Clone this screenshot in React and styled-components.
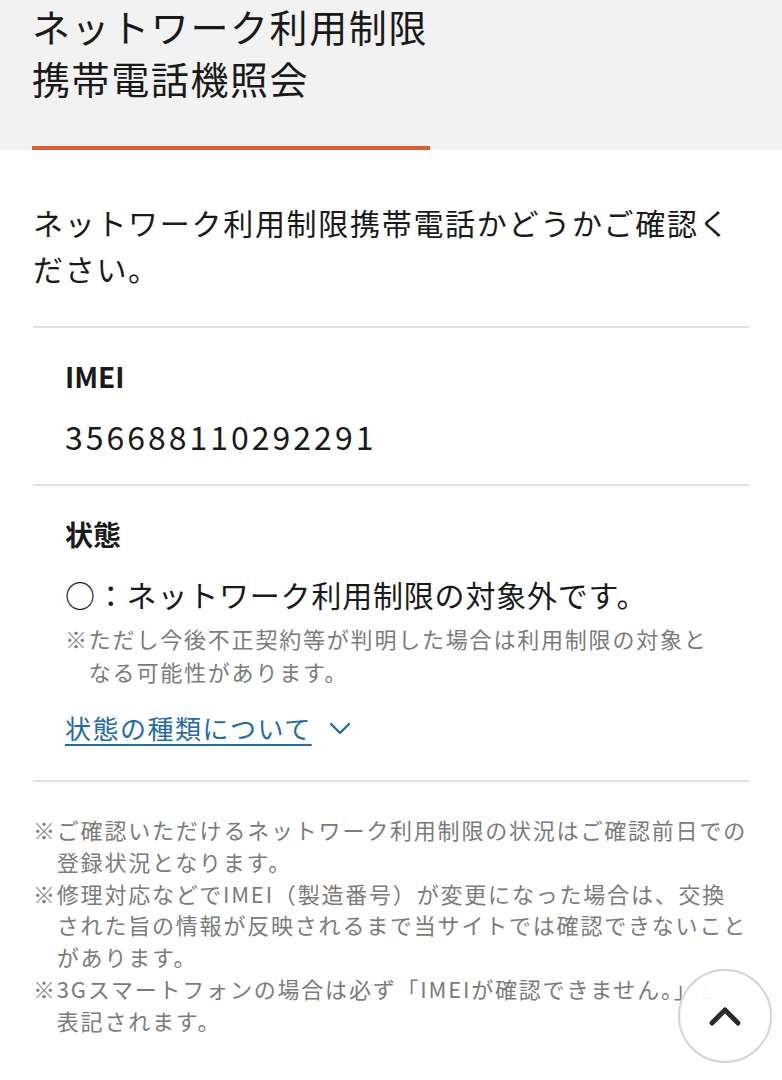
import React from 'react';
import styled, {createGlobalStyle} from 'styled-components';

const Global = createGlobalStyle`
    html, body {
        margin:0;
        padding:0;
        background:#fff;
    }
    body {
        font-family:"Noto Sans CJK JP", "Noto Sans", sans-serif;
        color:#1a1a1a;
    }
`;

const Header = styled.header`
    background-color:#f2f2f2;
    padding:0 32px;
`;

const Title = styled.h1`
    margin:0;
    font-size:38px;
    font-weight:400;
    line-height:52px;
    letter-spacing:1.6px;
    color:#1a1a1a;
`;

const TitleBar = styled.div`
    margin-top:42px;
    width:398px;
    height:4px;
    background:#dd5f2c;
`;

const Main = styled.main`
    padding:0 33px;
`;

const Intro = styled.p`
    margin:49px 0 35px;
    font-size:30px;
    line-height:46px;
    letter-spacing:1.7px;
`;

const Section = styled.section`
    border-top:2px solid #e0e0e0;
    padding:${p => p.$pad || '28px 32px 26px'};
`;

const Label = styled.h2`
    margin:0;
    font-size:28px;
    font-weight:700;
    line-height:40px;
`;

const Value = styled.div`
    margin-top:18px;
    font-size:32px;
    line-height:44px;
    letter-spacing:3px;
`;

const Status = styled.div`
    margin-top:18px;
    font-size:30px;
    line-height:44px;
    letter-spacing:0.8px;
`;

const Note = styled.p`
    margin:${p => p.$m || '0'};
    font-size:22px;
    line-height:${p => p.$lh || '33px'};
    letter-spacing:1.8px;
    color:#7b7b7b;
    padding-left:23.8px;
    text-indent:-23.8px;
`;

const Toggle = styled.a`
    display:inline-flex;
    align-items:center;
    gap:16px;
    margin-top:20px;
    font-size:26px;
    line-height:40px;
    letter-spacing:1.5px;
    color:#1f6bac;
    cursor:pointer;
`;

const ToggleText = styled.span`
    text-decoration:underline;
    text-underline-offset:5px;
`;

const Notes = styled.div`
    border-top:2px solid #e0e0e0;
    padding:32px 1px 0 0;
`;

const TopButton = styled.button`
    position:fixed;
    right:10px;
    bottom:17px;
    width:94px;
    height:94px;
    border-radius:50%;
    border:2px solid #d4d4d4;
    background:rgba(255,255,255,0.96);
    display:flex;
    align-items:center;
    justify-content:center;
    padding:0;
    cursor:pointer;
`;

export default function App() {
    return (
        <>
            <Global/>
            <Header>
                <Title>ネットワーク利用制限<br/>携帯電話機照会</Title>
                <TitleBar/>
            </Header>
            <Main>
                <Intro>ネットワーク利用制限携帯電話かどうかご確認ください。</Intro>
                <Section>
                    <Label>IMEI</Label>
                    <Value>356688110292291</Value>
                </Section>
                <Section $pad="28px 32px 32px">
                    <Label>状態</Label>
                    <Status>○：ネットワーク利用制限の対象外です。</Status>
                    <Note $m="6px 0 0">※ただし今後不正契約等が判明した場合は利用制限の対象となる可能性があります。</Note>
                    <Toggle>
                        <ToggleText>状態の種類について</ToggleText>
                        <svg width="24" height="16" viewBox="0 0 24 16" fill="none" stroke="#1f6bac" strokeWidth="2.4" strokeLinecap="round" strokeLinejoin="round">
                            <path d="M3 4l9 9 9-9"/>
                        </svg>
                    </Toggle>
                </Section>
                <Notes>
                    <Note $lh="31.8px">※ご確認いただけるネットワーク利用制限の状況はご確認前日での登録状況となります。</Note>
                    <Note $lh="31.8px">※修理対応などでIMEI（製造番号）が変更になった場合は、交換された旨の情報が反映されるまで当サイトでは確認できないことがあります。</Note>
                    <Note $lh="31.8px">※3Gスマートフォンの場合は必ず「IMEIが確認できません。」と<br/>表記されます。</Note>
                </Notes>
            </Main>
            <TopButton aria-label="ページトップへ">
                <svg width="34" height="22" viewBox="0 0 34 22" fill="none" stroke="#2b2b2b" strokeWidth="5" strokeLinecap="round" strokeLinejoin="round">
                    <path d="M4 18L17 5l13 13"/>
                </svg>
            </TopButton>
        </>
    );
}
